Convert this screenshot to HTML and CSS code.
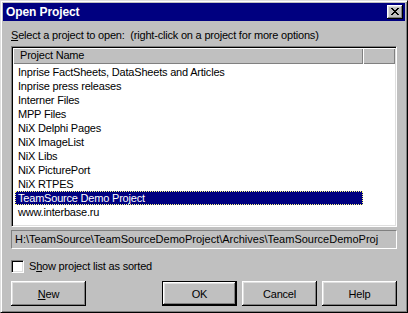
FILE: index.html
```html
<!DOCTYPE html>
<html>
<head>
<meta charset="utf-8">
<link rel="stylesheet" href="styles.css">
</head>
<body>
<div class="window">
  <div class="titlebar">
    <span class="title">Open Project</span>
    <div class="close">
      <svg width="8" height="7" viewBox="0 0 8 7" shape-rendering="crispEdges">
        <rect x="0" y="0" width="2" height="1"/><rect x="6" y="0" width="2" height="1"/>
        <rect x="1" y="1" width="2" height="1"/><rect x="5" y="1" width="2" height="1"/>
        <rect x="2" y="2" width="4" height="1"/>
        <rect x="3" y="3" width="2" height="1"/>
        <rect x="2" y="4" width="4" height="1"/>
        <rect x="1" y="5" width="2" height="1"/><rect x="5" y="5" width="2" height="1"/>
        <rect x="0" y="6" width="2" height="1"/><rect x="6" y="6" width="2" height="1"/>
      </svg>
    </div>
  </div>
  <div class="content">
    <div class="prompt"><u>S</u>elect a project to open:&nbsp; (right-click on a project for more options)</div>
    <div class="listbox">
      <div class="header">
        <div class="hcol first">Project Name</div>
        <div class="hcol rest"></div>
      </div>
      <div class="rows">
        <div class="row">Inprise FactSheets, DataSheets and Articles</div>
        <div class="row">Inprise press releases</div>
        <div class="row">Interner Files</div>
        <div class="row">MPP Files</div>
        <div class="row">NiX Delphi Pages</div>
        <div class="row">NiX ImageList</div>
        <div class="row">NiX Libs</div>
        <div class="row">NiX PicturePort</div>
        <div class="row">NiX RTPES</div>
        <div class="row selected">TeamSource Demo Project</div>
        <div class="row">www.interbase.ru</div>
      </div>
    </div>
    <div class="pathfield">H:\TeamSource\TeamSourceDemoProject\Archives\TeamSourceDemoProj</div>
    <label class="check">
      <span class="box"></span>
      <span>S<u>h</u>ow project list as sorted</span>
    </label>
    <div class="buttons">
      <div class="btn"><u>N</u>ew</div>
      <div class="group">
        <div class="btn default">OK</div>
        <div class="btn">Cancel</div>
        <div class="btn">Help</div>
      </div>
    </div>
  </div>
</div>
</body>
</html>
```

FILE: styles.css
```css
html, body {
  margin: 0;
  padding: 0;
  background: #c0c0c0;
}

.window {
  width: 408px;
  height: 313px;
  box-sizing: border-box;
  background: #c0c0c0;
  border-top: 1px solid #dfdfdf;
  border-left: 1px solid #dfdfdf;
  border-right: 1px solid #000;
  border-bottom: 1px solid #000;
  box-shadow: inset 1px 1px 0 #fff, inset -1px -1px 0 #808080;
  padding: 2px;
  font-family: "Liberation Sans", Arial, sans-serif;
  font-size: 11px;
  letter-spacing: -0.2px;
  color: #000;
  overflow: hidden;
}

.titlebar {
  height: 18px;
  background: #000080;
  display: flex;
  align-items: center;
  justify-content: space-between;
  padding: 0 2px 0 3px;
}

.title {
  color: #fff;
  font-weight: bold;
  font-size: 12px;
  letter-spacing: -0.1px;
}

.close {
  width: 16px;
  height: 14px;
  box-sizing: border-box;
  background: #c0c0c0;
  box-shadow: inset -1px -1px 0 #000, inset 1px 1px 0 #fff, inset -2px -2px 0 #808080, inset 2px 2px 0 #dfdfdf;
  display: flex;
  align-items: center;
  justify-content: center;
  padding: 0 1px 1px 0;
}

.close svg {
  display: block;
  fill: #000;
}

.content {
  padding: 0 8px;
}

.prompt {
  height: 13px;
  line-height: 13px;
  margin-top: 8px;
  margin-bottom: 4px;
  white-space: nowrap;
}

.listbox {
  height: 181px;
  box-sizing: border-box;
  background: #fff;
  border-top: 1px solid #808080;
  border-left: 1px solid #808080;
  border-right: 1px solid #fff;
  border-bottom: 1px solid #fff;
  box-shadow: inset 1px 1px 0 #000, inset -1px -1px 0 #dfdfdf;
  padding: 1px;
  overflow: hidden;
}

.header {
  display: flex;
  height: 16px;
}

.hcol {
  box-sizing: border-box;
  background: #c0c0c0;
  box-shadow: inset 1px 1px 0 #fff, inset -1px -1px 0 #808080;
  line-height: 15px;
  white-space: nowrap;
}

.hcol.first {
  width: 350px;
  padding-left: 7px;
}

.hcol.rest {
  flex: 1;
}

.rows {
  padding-top: 1px;
}

.row {
  height: 14px;
  line-height: 14px;
  padding-left: 5px;
  white-space: nowrap;
  width: 348px;
  box-sizing: border-box;
}

.row.selected {
  margin-left: 2px;
  padding-left: 3px;
  background: #000080;
  color: #fff;
  outline: 1px dotted #ffff80;
  outline-offset: -1px;
}

.pathfield {
  margin-top: 3px;
  height: 19px;
  box-sizing: border-box;
  border-top: 1px solid #808080;
  border-left: 1px solid #808080;
  border-right: 1px solid #fff;
  border-bottom: 1px solid #fff;
  line-height: 17px;
  padding-left: 3px;
  letter-spacing: 0;
  white-space: nowrap;
  overflow: hidden;
}

.check {
  display: flex;
  align-items: center;
  margin-top: 11px;
  height: 13px;
  line-height: 13px;
}

.box {
  width: 13px;
  height: 13px;
  box-sizing: border-box;
  background: #fff;
  border-top: 1px solid #808080;
  border-left: 1px solid #808080;
  border-right: 1px solid #fff;
  border-bottom: 1px solid #fff;
  box-shadow: inset 1px 1px 0 #000, inset -1px -1px 0 #dfdfdf;
  margin-right: 5px;
}

.buttons {
  margin-top: 8px;
  display: flex;
  justify-content: space-between;
}

.group {
  display: flex;
  gap: 5px;
}

.btn {
  width: 75px;
  height: 25px;
  box-sizing: border-box;
  background: #c0c0c0;
  box-shadow: inset -1px -1px 0 #000, inset 1px 1px 0 #fff, inset -2px -2px 0 #808080, inset 2px 2px 0 #dfdfdf;
  display: flex;
  align-items: center;
  justify-content: center;
}

.btn.default {
  border: 1px solid #000;
}
```
